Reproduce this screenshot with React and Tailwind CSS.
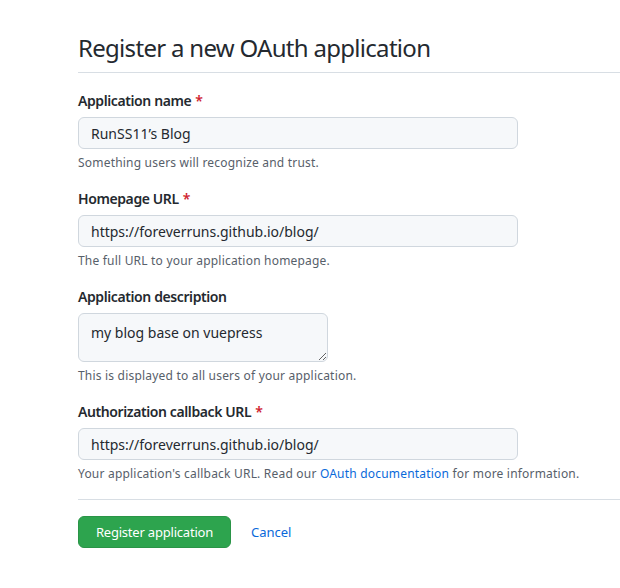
import React from "react";

const font = { fontFamily: '"Segoe UI", "Noto Sans", "Liberation Sans", sans-serif' };

function Label({ children, required }) {
  return (
    <div className="text-[14px] leading-[21px] font-semibold tracking-[-0.4px] text-[#24292f]">
      {children}
      {required && <span className="text-[#cf222e] ml-[4px]">*</span>}
    </div>
  );
}

function Note({ children }) {
  return <div className="mt-[5px] text-[12px] leading-[18px] tracking-[0.2px] text-[#57606a]">{children}</div>;
}

function Input({ value }) {
  return (
    <input
      readOnly
      value={value}
      className="mt-[6px] block w-[440px] h-[32px] px-[12px] text-[14px] text-[#24292f] bg-[#f6f8fa] border border-[#d0d7de] rounded-[6px] outline-none"
      style={font}
    />
  );
}

export default function App() {
  return (
    <div className="w-[620px] h-[588px] bg-white overflow-hidden" style={font}>
      <div className="pl-[78px]">
        <div className="pt-[30px] pb-[6px] border-b border-[#d8dee4]">
          <h1 className="text-[24px] leading-[36px] font-normal tracking-[-0.7px] text-[#24292f]">Register a new OAuth application</h1>
        </div>
        <div className="pt-[17px] w-[542px]">
          <Label required>Application name</Label>
          <Input value="RunSS11’s Blog" />
          <Note>Something users will recognize and trust.</Note>

          <div className="mt-[16px]">
            <Label required>Homepage URL</Label>
            <Input value="https://foreverruns.github.io/blog/" />
            <Note>The full URL to your application homepage.</Note>
          </div>

          <div className="mt-[16px]">
            <Label>Application description</Label>
            <textarea
              readOnly
              value="my blog base on vuepress"
              className="mt-[6px] block w-[250px] h-[49px] px-[12px] pt-[9px] text-[14px] leading-[20px] text-[#24292f] bg-[#f6f8fa] border border-[#d0d7de] rounded-[6px] outline-none resize"
              style={font}
            />
            <Note>This is displayed to all users of your application.</Note>
          </div>

          <div className="mt-[16px] pb-[16px] border-b border-[#d8dee4]">
            <Label required>Authorization callback URL</Label>
            <Input value="https://foreverruns.github.io/blog/" />
            <Note>
              Your application's callback URL. Read our{" "}
              <span className="text-[#0969da]">OAuth documentation</span> for more information.
            </Note>
          </div>

          <div className="mt-[16px] flex items-center">
            <button className="h-[32px] w-[153px] pt-[2px] rounded-[6px] bg-[#2da44e] text-white text-[13px] tracking-[-0.2px] border border-[#2a9447]" style={font}>
              Register application
            </button>
            <span className="ml-[20px] pt-[2px] text-[13px] text-[#0969da]">Cancel</span>
          </div>
        </div>
      </div>
    </div>
  );
}
